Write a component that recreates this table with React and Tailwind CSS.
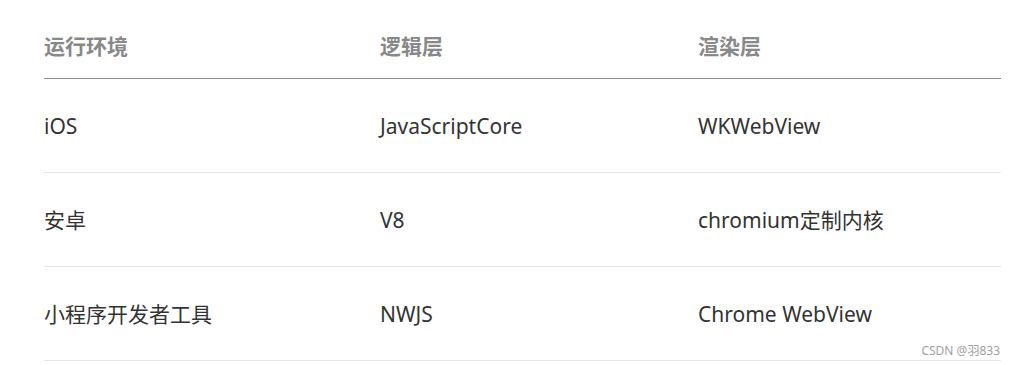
import React from 'react';

const rows = [
    ["iOS", "JavaScriptCore", "WKWebView"],
    ["安卓", "V8", "chromium定制内核"],
    ["小程序开发者工具", "NWJS", "Chrome WebView"],
];

const font = { fontFamily: '"Noto Sans", "Noto Sans CJK SC", sans-serif' };

function App() {
    return (
        <div className="relative w-[1015px] h-[365px] bg-white overflow-hidden" style={font}>
            <div className="ml-[44px] w-[957px]">
                {/* header */}
                <div className="grid grid-cols-[336px_318px_1fr] h-[79px] border-b border-[#8c8c8c] pt-[32px] text-[21px] leading-[28px] font-bold text-[#888888]">
                    <div>运行环境</div>
                    <div>逻辑层</div>
                    <div>渲染层</div>
                </div>
                {rows.map((row, index) => (
                    <div key={index} className="grid grid-cols-[336px_318px_1fr] items-center h-[94px] border-b border-[#e6e6e6] text-[21px] leading-[28px] text-[#333333]">
                        {row.map((cell, i) => (
                            <div key={i}>{cell}</div>
                        ))}
                    </div>
                ))}
            </div>
            <div className="absolute right-[15px] top-[343px] text-[12px] leading-[16px] text-[#a0a0a0]">CSDN @羽833</div>
        </div>
    );
}

export default App;
